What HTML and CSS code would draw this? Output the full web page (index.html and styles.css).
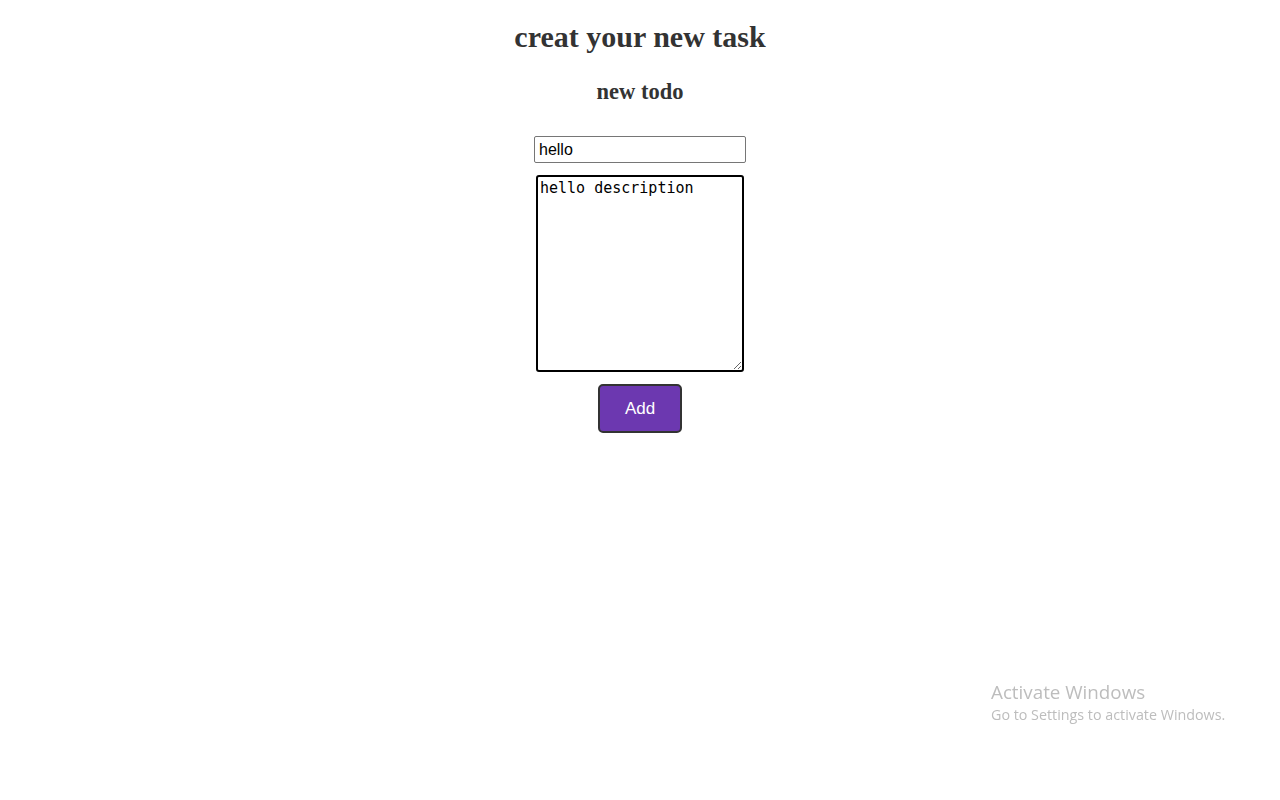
FILE: index.html
```html
<!DOCTYPE html>
<html>
<head>
<meta charset="utf-8">
<link rel="stylesheet" href="styles.css">
</head>
<body>
<div class="page">
  <h1 class="title">creat your new task</h1>
  <h2 class="subtitle">new todo</h2>
  <form class="todo-form">
    <input class="todo-title" type="text" value="hello">
    <textarea class="todo-desc">hello description</textarea>
    <button class="add-btn" type="button">Add</button>
  </form>
</div>
<div class="watermark">
  <div class="wm-title">Activate Windows</div>
  <div class="wm-sub">Go to Settings to activate Windows.</div>
</div>
</body>
</html>
```

FILE: styles.css
```css
html, body {
  margin: 0;
  padding: 0;
  background: #ffffff;
}
body {
  font-family: "Liberation Serif", "Times New Roman", serif;
  color: #333333;
}
.page {
  display: flex;
  flex-direction: column;
  align-items: center;
}
.title {
  font-size: 30px;
  font-weight: bold;
  margin: 20px 0 0 0;
  line-height: 34px;
}
.subtitle {
  font-size: 22.5px;
  font-weight: bold;
  margin: 25px 0 0 0;
  line-height: 26px;
}
.todo-form {
  display: flex;
  flex-direction: column;
  align-items: center;
  margin-top: 31px;
}
.todo-title {
  box-sizing: border-box;
  width: 212px;
  height: 27px;
  border: 1px solid #767676;
  border-radius: 2px;
  padding: 1px 4px;
  font-family: "Liberation Sans", Arial, sans-serif;
  font-size: 16px;
  color: #000;
  outline: none;
}
.todo-desc {
  box-sizing: border-box;
  width: 208px;
  height: 197px;
  margin-top: 12px;
  border: 2px solid #000;
  border-radius: 3px;
  padding: 2px 2px;
  font-family: "DejaVu Sans Mono", monospace;
  font-size: 15px;
  line-height: 19px;
  color: #000;
  outline: none;
  resize: both;
}
.add-btn {
  box-sizing: border-box;
  width: 84px;
  height: 49px;
  margin-top: 12px;
  background: #6c38b0;
  border: 2px solid #333333;
  border-radius: 5px;
  color: #ffffff;
  font-family: "Liberation Sans", Arial, sans-serif;
  font-size: 17px;
  cursor: pointer;
}
.watermark {
  position: fixed;
  left: 991px;
  top: 680px;
  font-family: "Open Sans", "Noto Sans", sans-serif;
  color: #bdbdbd;
}
.wm-title {
  font-size: 18.8px;
  line-height: 24px;
}
.wm-sub {
  font-size: 14.3px;
  line-height: 21px;
}
```
